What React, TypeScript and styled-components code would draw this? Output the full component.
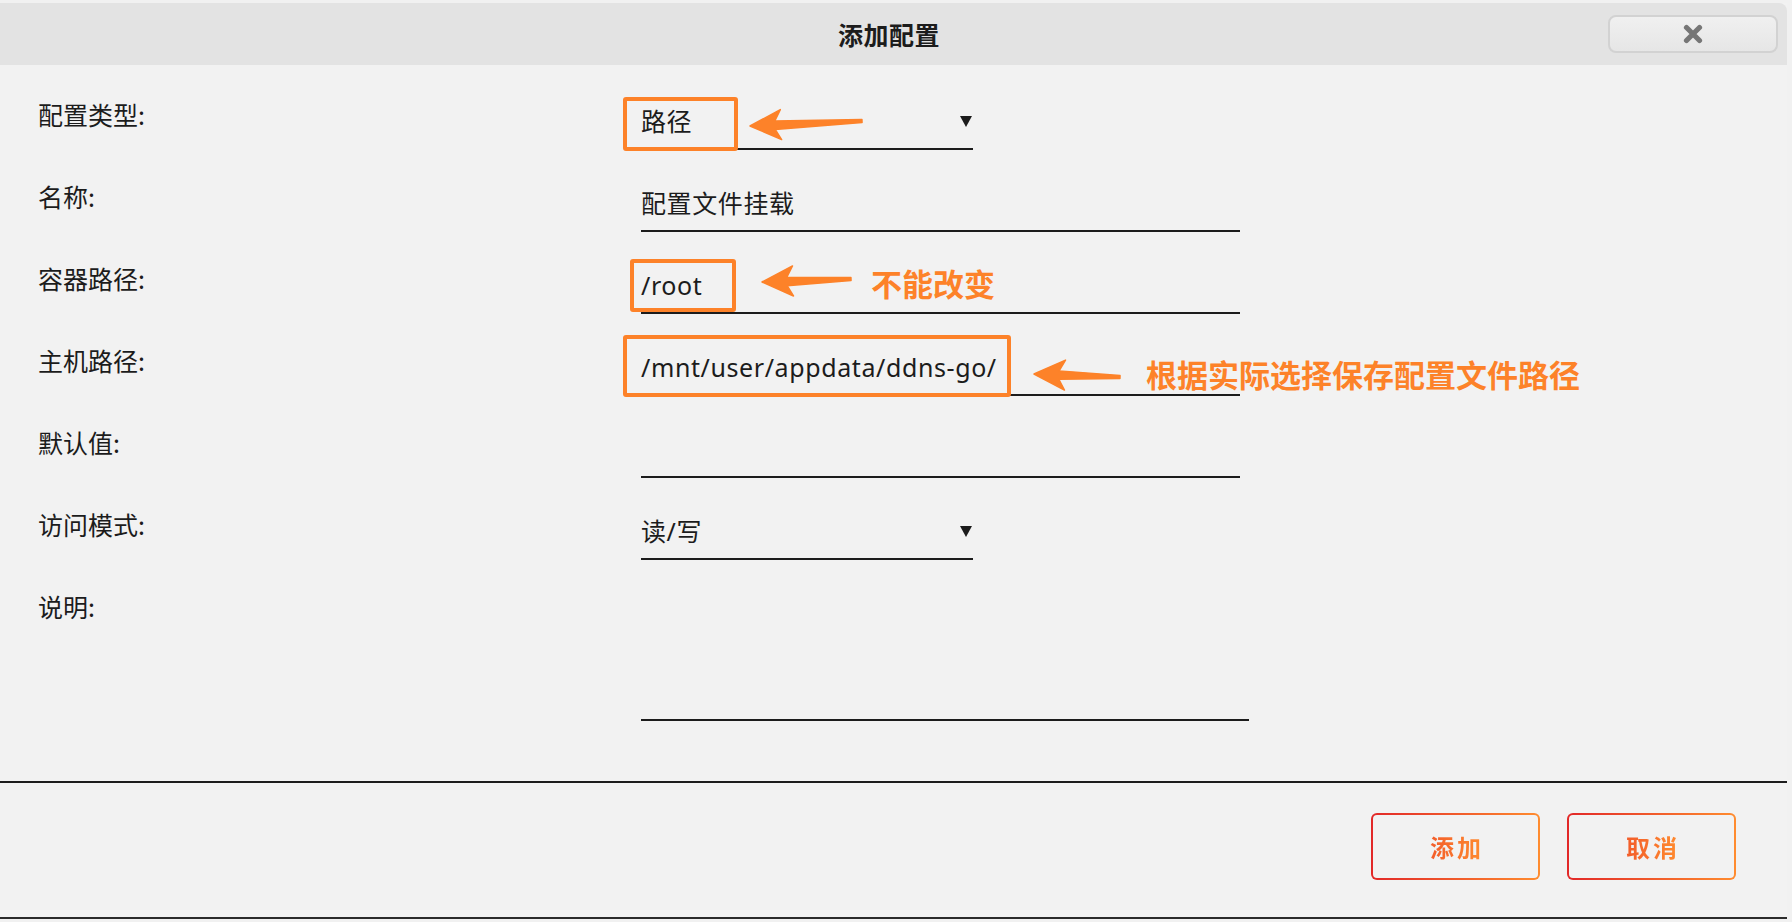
import React from "react";
import styled, { createGlobalStyle } from "styled-components";

const Global = createGlobalStyle`
  html, body { margin: 0; padding: 0; background: #f2f2f2; }
  body { font-family: "Noto Sans", "Noto Sans CJK SC", sans-serif; color: #1c1c1c; }
  * { box-sizing: border-box; }
`;

const ORANGE = "#fd8229";

const Page = styled.div`
  width: 1792px;
  height: 922px;
  padding-top: 3px;
  padding-right: 5px;
  background: #f1f1f1;
  overflow: hidden;
`;

const Dialog = styled.div`
  background: #f2f2f2;
  display: flex;
  flex-direction: column;
`;

const Header = styled.div`
  height: 62px;
  background: #e3e3e3;
  border-top-right-radius: 8px;
  display: grid;
  grid-template-columns: 1fr auto 1fr;
  align-items: center;
  padding-right: 9px;
`;

const Title = styled.h1`
  margin: 0;
  font-family: "Noto Sans CJK SC", sans-serif;
  font-size: 25px;
  font-weight: 700;
  color: #1c1c1c;
  line-height: 1;
  letter-spacing: 0.5px;
`;

const CloseButton = styled.button`
  justify-self: end;
  width: 170px;
  height: 38px;
  border: 2px solid #d2d2d2;
  border-radius: 8px;
  background: linear-gradient(#f0f0f0, #e6e6e6);
  display: flex;
  align-items: center;
  justify-content: center;
  padding: 0;
`;

const Form = styled.div`
  padding: 29px 0 60px 38px;
  display: flex;
  flex-direction: column;
`;

const Row = styled.div<{ $h?: number }>`
  display: grid;
  grid-template-columns: 603px auto;
  height: ${(p) => p.$h ?? 82}px;
  align-items: start;
`;

const Label = styled.div`
  font-family: "Noto Sans CJK SC", sans-serif;
  font-size: 25px;
  line-height: 40px;
  color: #1c1c1c;
`;

const FieldWrap = styled.div`
  position: relative;
`;

const Field = styled.div<{ $w: number; $h?: number }>`
  width: ${(p) => p.$w}px;
  height: ${(p) => p.$h ?? 56}px;
  border-bottom: 2px solid #1c1c1c;
  display: flex;
  align-items: center;
  justify-content: space-between;
  font-size: 25px;
  line-height: 1;
  color: #1c1c1c;
`;

const Value = styled.span`
  font-family: "Noto Sans", "Noto Sans CJK SC", sans-serif;
  letter-spacing: 0.6px;
  white-space: nowrap;
`;

const Caret = styled.span`
  width: 0;
  height: 0;
  border-left: 6px solid transparent;
  border-right: 6px solid transparent;
  border-top: 11px solid #1c1c1c;
  margin-right: 1px;
`;

const Highlight = styled.div`
  position: absolute;
  border: 4px solid ${ORANGE};
  border-radius: 3px;
  pointer-events: none;
`;

const Note = styled.div`
  position: absolute;
  font-family: "Noto Sans CJK SC", sans-serif;
  font-weight: 700;
  font-size: 31px;
  line-height: 40px;
  color: ${ORANGE};
  white-space: nowrap;
`;

const ArrowSvg = styled.svg`
  position: absolute;
  height: 40px;
  overflow: visible;
  transform-origin: 0 50%;
`;

const Footer = styled.div`
  border-top: 2px solid #1c1c1c;
  border-bottom: 2px solid #2b2b2b;
  display: flex;
  justify-content: flex-end;
  gap: 27px;
  padding: 30px 51px 37px 0;
`;

const Button = styled.button`
  width: 169px;
  height: 67px;
  border: 2.5px solid transparent;
  border-radius: 6px;
  background: linear-gradient(#f2f2f2, #f2f2f2) padding-box,
    linear-gradient(90deg, #e22828, #ff8c2f) border-box;
  display: flex;
  align-items: center;
  justify-content: center;
  padding: 0;
  cursor: pointer;
`;

const ButtonText = styled.span`
  font-family: "Noto Sans CJK SC", sans-serif;
  font-weight: 700;
  font-size: 24px;
  letter-spacing: 3px;
  padding-left: 3px;
  background: linear-gradient(90deg, #f25a2a, #ff8c2f);
  -webkit-background-clip: text;
  background-clip: text;
  color: transparent;
`;

type Pt = [number, number];

const Arrow: React.FC<{ tip: Pt; tail: Pt }> = ({ tip, tail }) => {
  const dx = tail[0] - tip[0];
  const dy = tail[1] - tip[1];
  const L = Math.hypot(dx, dy);
  const a = (Math.atan2(dy, dx) * 180) / Math.PI;
  const d = `M0,20 L31,5 L25,16 L${L},18.6 L${L},21.4 L25,24.5 L31,35 Z`;
  return (
    <ArrowSvg
      viewBox={`0 0 ${L} 40`}
      width={L}
      style={{ left: tip[0], top: tip[1] - 20, transform: `rotate(${a}deg)` }}
    >
      <path d={d} fill={ORANGE} stroke={ORANGE} strokeWidth={1.5} strokeLinejoin="round" />
    </ArrowSvg>
  );
};

const XIcon = () => (
  <svg width="20" height="20" viewBox="0 0 20 20">
    <path d="M3.5 3.5 L16.5 16.5 M16.5 3.5 L3.5 16.5" stroke="#767676" strokeWidth="5.2" strokeLinecap="round" />
  </svg>
);

export default function App() {
  return (
    <>
      <Global />
      <Page>
        <Dialog>
          <Header>
            <span />
            <Title>添加配置</Title>
            <CloseButton aria-label="关闭">
              <XIcon />
            </CloseButton>
          </Header>
          <Form>
            <Row>
              <Label>配置类型:</Label>
              <FieldWrap>
                <Field $w={332}>
                  <Value>路径</Value>
                  <Caret />
                </Field>
                <Highlight style={{ left: -18, top: 3, width: 115, height: 54 }} />
                <Arrow tip={[109, 32]} tail={[221, 27]} />
              </FieldWrap>
            </Row>
            <Row>
              <Label>名称:</Label>
              <FieldWrap>
                <Field $w={599}>
                  <Value>配置文件挂载</Value>
                </Field>
              </FieldWrap>
            </Row>
            <Row>
              <Label>容器路径:</Label>
              <FieldWrap>
                <Field $w={599}>
                  <Value>/root</Value>
                </Field>
                <Highlight style={{ left: -11, top: 1, width: 106, height: 53 }} />
                <Arrow tip={[121, 24]} tail={[210, 21]} />
                <Note style={{ left: 230, top: 5 }}>不能改变</Note>
              </FieldWrap>
            </Row>
            <Row>
              <Label>主机路径:</Label>
              <FieldWrap>
                <Field $w={599}>
                  <Value>/mnt/user/appdata/ddns-go/</Value>
                </Field>
                <Highlight style={{ left: -18, top: -5, width: 388, height: 62 }} />
                <Arrow tip={[393, 34]} tail={[479, 37]} />
                <Note style={{ left: 505, top: 14 }}>根据实际选择保存配置文件路径</Note>
              </FieldWrap>
            </Row>
            <Row>
              <Label>默认值:</Label>
              <FieldWrap>
                <Field $w={599} />
              </FieldWrap>
            </Row>
            <Row>
              <Label>访问模式:</Label>
              <FieldWrap>
                <Field $w={332}>
                  <Value>读/写</Value>
                  <Caret />
                </Field>
              </FieldWrap>
            </Row>
            <Row $h={135}>
              <Label>说明:</Label>
              <FieldWrap>
                <Field $w={608} $h={135} />
              </FieldWrap>
            </Row>
          </Form>
          <Footer>
            <Button>
              <ButtonText>添加</ButtonText>
            </Button>
            <Button>
              <ButtonText>取消</ButtonText>
            </Button>
          </Footer>
        </Dialog>
      </Page>
    </>
  );
}
